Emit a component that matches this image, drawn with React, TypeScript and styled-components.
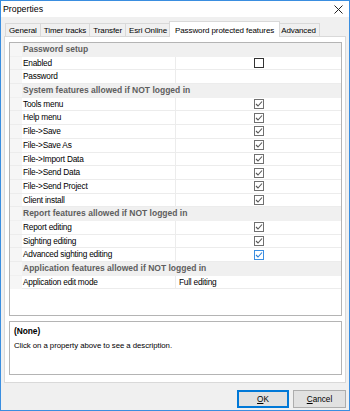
import styled, { createGlobalStyle } from "styled-components";

const GlobalStyle = createGlobalStyle`
  html, body {
    margin: 0;
    padding: 0;
    background: #f0f0f0;
  }
  body {
    font-family: "Liberation Sans", Arial, sans-serif;
    color: #000;
  }
`;

type Row =
  | { kind: "cat"; label: string }
  | { kind: "item"; label: string; check?: "on" | "off" | "focus"; value?: string };

const rows: Row[] = [
  { kind: "cat", label: "Password setup" },
  { kind: "item", label: "Enabled", check: "off" },
  { kind: "item", label: "Password" },
  { kind: "cat", label: "System features allowed if NOT logged in" },
  { kind: "item", label: "Tools menu", check: "on" },
  { kind: "item", label: "Help menu", check: "on" },
  { kind: "item", label: "File->Save", check: "on" },
  { kind: "item", label: "File->Save As", check: "on" },
  { kind: "item", label: "File->Import Data", check: "on" },
  { kind: "item", label: "File->Send Data", check: "on" },
  { kind: "item", label: "File->Send Project", check: "on" },
  { kind: "item", label: "Client install", check: "on" },
  { kind: "cat", label: "Report features allowed if NOT logged in" },
  { kind: "item", label: "Report editing", check: "on" },
  { kind: "item", label: "Sighting editing", check: "on" },
  { kind: "item", label: "Advanced sighting editing", check: "focus" },
  { kind: "cat", label: "Application features allowed if NOT logged in" },
  { kind: "item", label: "Application edit mode", value: "Full editing" },
];

const tabs = ["General", "Timer tracks", "Transfer", "Esri Online", "Password protected features", "Advanced"];
const activeTab = 4;

const Window = styled.div`
  width: 350px;
  height: 411px;
  box-sizing: border-box;
  border: 1px solid #3a8ee0;
  display: flex;
  flex-direction: column;
  background: #f0f0f0;
  overflow: hidden;
`;

const TitleBar = styled.div`
  height: 16px;
  flex: none;
  background: #fff;
  display: flex;
  align-items: center;
  justify-content: space-between;
  padding: 0 6px 0 2px;
  font-size: 8.8px;
`;

const Body = styled.div`
  flex: 1;
  display: flex;
  flex-direction: column;
  padding: 4px 3px 0 3px;
`;

const TabStrip = styled.div`
  height: 16px;
  display: flex;
  align-items: flex-end;
  padding-left: 1px;
  margin-bottom: -1px;
  position: relative;
  z-index: 1;
`;

const Tab = styled.div<{ $active?: boolean }>`
  box-sizing: border-box;
  height: ${(p) => (p.$active ? "16px" : "14px")};
  padding: ${(p) => (p.$active ? "1px 5px 0" : "0 3px")};
  margin: ${(p) => (p.$active ? "0 -2px" : "0")};
  border: 1px solid #d9d9d9;
  border-bottom: ${(p) => (p.$active ? "none" : "1px solid #d9d9d9")};
  border-left: ${(p) => (p.$active ? "1px solid #d9d9d9" : "none")};
  background: ${(p) => (p.$active ? "#fff" : "#f0f0f0")};
  font-size: 8px;
  letter-spacing: -0.1px;
  display: flex;
  align-items: center;
  white-space: nowrap;
  position: relative;
  z-index: ${(p) => (p.$active ? 2 : 1)};

  &:first-child {
    border-left: 1px solid #d9d9d9;
  }
`;

const Panel = styled.div`
  box-sizing: border-box;
  height: 347px;
  border: 1px solid #d9d9d9;
  background: #fff;
  padding: 5px 3px 7px 4px;
  display: flex;
  flex-direction: column;
  gap: 5px;
`;

const Grid = styled.div`
  box-sizing: border-box;
  height: 274px;
  border: 1px solid #b4b4b4;
  background: #fff;
  display: flex;
  flex-direction: column;
`;

const GridRow = styled.div<{ $category?: boolean }>`
  box-sizing: border-box;
  height: 13.7px;
  flex: none;
  display: grid;
  grid-template-columns: 12px 154px 1fr;
  background: ${(p) => (p.$category ? "#f0f0f0" : "#fff")};
  border-bottom: 1px solid ${(p) => (p.$category ? "#f0f0f0" : "#ececec")};
  font-size: 8.3px;
  letter-spacing: -0.22px;
  line-height: 13px;
`;

const Margin = styled.div`
  background: #f6f6f6;
`;

const CategoryLabel = styled.div`
  grid-column: 2 / 4;
  padding-left: 1px;
  font-weight: bold;
  font-size: 8.5px;
  color: #5e5e5e;
  letter-spacing: 0;
  white-space: nowrap;
`;

const Label = styled.div`
  padding-left: 1px;
  border-right: 1px solid #ececec;
  white-space: nowrap;
  overflow: hidden;
`;

const Value = styled.div`
  display: flex;
  align-items: center;
  justify-content: center;
`;

const ValueText = styled.div`
  padding-left: 3px;
  white-space: nowrap;
`;

const Description = styled.div`
  box-sizing: border-box;
  flex: 1;
  border: 1px solid #b4b4b4;
  background: #fff;
  padding: 3px 4px;
  font-size: 7.8px;
  letter-spacing: -0.05px;
  line-height: 13px;
`;

const DescTitle = styled.div`
  font-weight: bold;
  font-size: 8.4px;
  margin-bottom: 1px;
`;

const Footer = styled.div`
  flex: 1;
  display: flex;
  justify-content: flex-end;
  align-items: flex-start;
  gap: 4px;
  padding-top: 7px;
`;

const Button = styled.div<{ $default?: boolean }>`
  box-sizing: border-box;
  width: ${(p) => (p.$default ? "52px" : "53px")};
  height: 18px;
  border: 1px solid ${(p) => (p.$default ? "#0078d7" : "#adadad")};
  box-shadow: ${(p) => (p.$default ? "inset 0 0 0 1px #0078d7" : "none")};
  background: #e1e1e1;
  display: flex;
  align-items: center;
  justify-content: center;
  font-size: 8.2px;

  u {
    text-decoration: underline;
  }
`;

function CheckBox({ state }: { state: "on" | "off" | "focus" }) {
  const stroke = state === "off" ? "#333" : state === "focus" ? "#3c8ee0" : "#707070";
  const tick = state === "focus" ? "#2b7fd6" : "#555";
  return (
    <svg width="10" height="10" viewBox="0 0 10 10">
      <rect x="0.5" y="0.5" width="9" height="9" fill="#fff" stroke={stroke} />
      {state !== "off" && (
        <polyline points="2,5 4,7 8,2.5" fill="none" stroke={tick} strokeWidth="1.1" />
      )}
    </svg>
  );
}

function CloseIcon() {
  return (
    <svg width="9" height="9" viewBox="0 0 9 9">
      <path d="M0.5 0.5 L8.5 8.5 M8.5 0.5 L0.5 8.5" stroke="#222" strokeWidth="1" />
    </svg>
  );
}

export default function App() {
  return (
    <>
      <GlobalStyle />
      <Window>
        <TitleBar>
          <span>Properties</span>
          <CloseIcon />
        </TitleBar>
        <Body>
          <TabStrip>
            {tabs.map((t, i) => (
              <Tab key={t} $active={i === activeTab}>
                {t}
              </Tab>
            ))}
          </TabStrip>
          <Panel>
            <Grid>
              {rows.map((r) =>
                r.kind === "cat" ? (
                  <GridRow key={r.label} $category>
                    <Margin />
                    <CategoryLabel>{r.label}</CategoryLabel>
                  </GridRow>
                ) : (
                  <GridRow key={r.label}>
                    <Margin />
                    <Label>{r.label}</Label>
                    {r.check ? (
                      <Value>
                        <CheckBox state={r.check} />
                      </Value>
                    ) : (
                      <ValueText>{r.value}</ValueText>
                    )}
                  </GridRow>
                )
              )}
            </Grid>
            <Description>
              <DescTitle>(None)</DescTitle>
              <div>Click on a property above to see a description.</div>
            </Description>
          </Panel>
          <Footer>
            <Button $default>
              <span>
                <u>O</u>K
              </span>
            </Button>
            <Button>
              <span>
                <u>C</u>ancel
              </span>
            </Button>
          </Footer>
        </Body>
      </Window>
    </>
  );
}
